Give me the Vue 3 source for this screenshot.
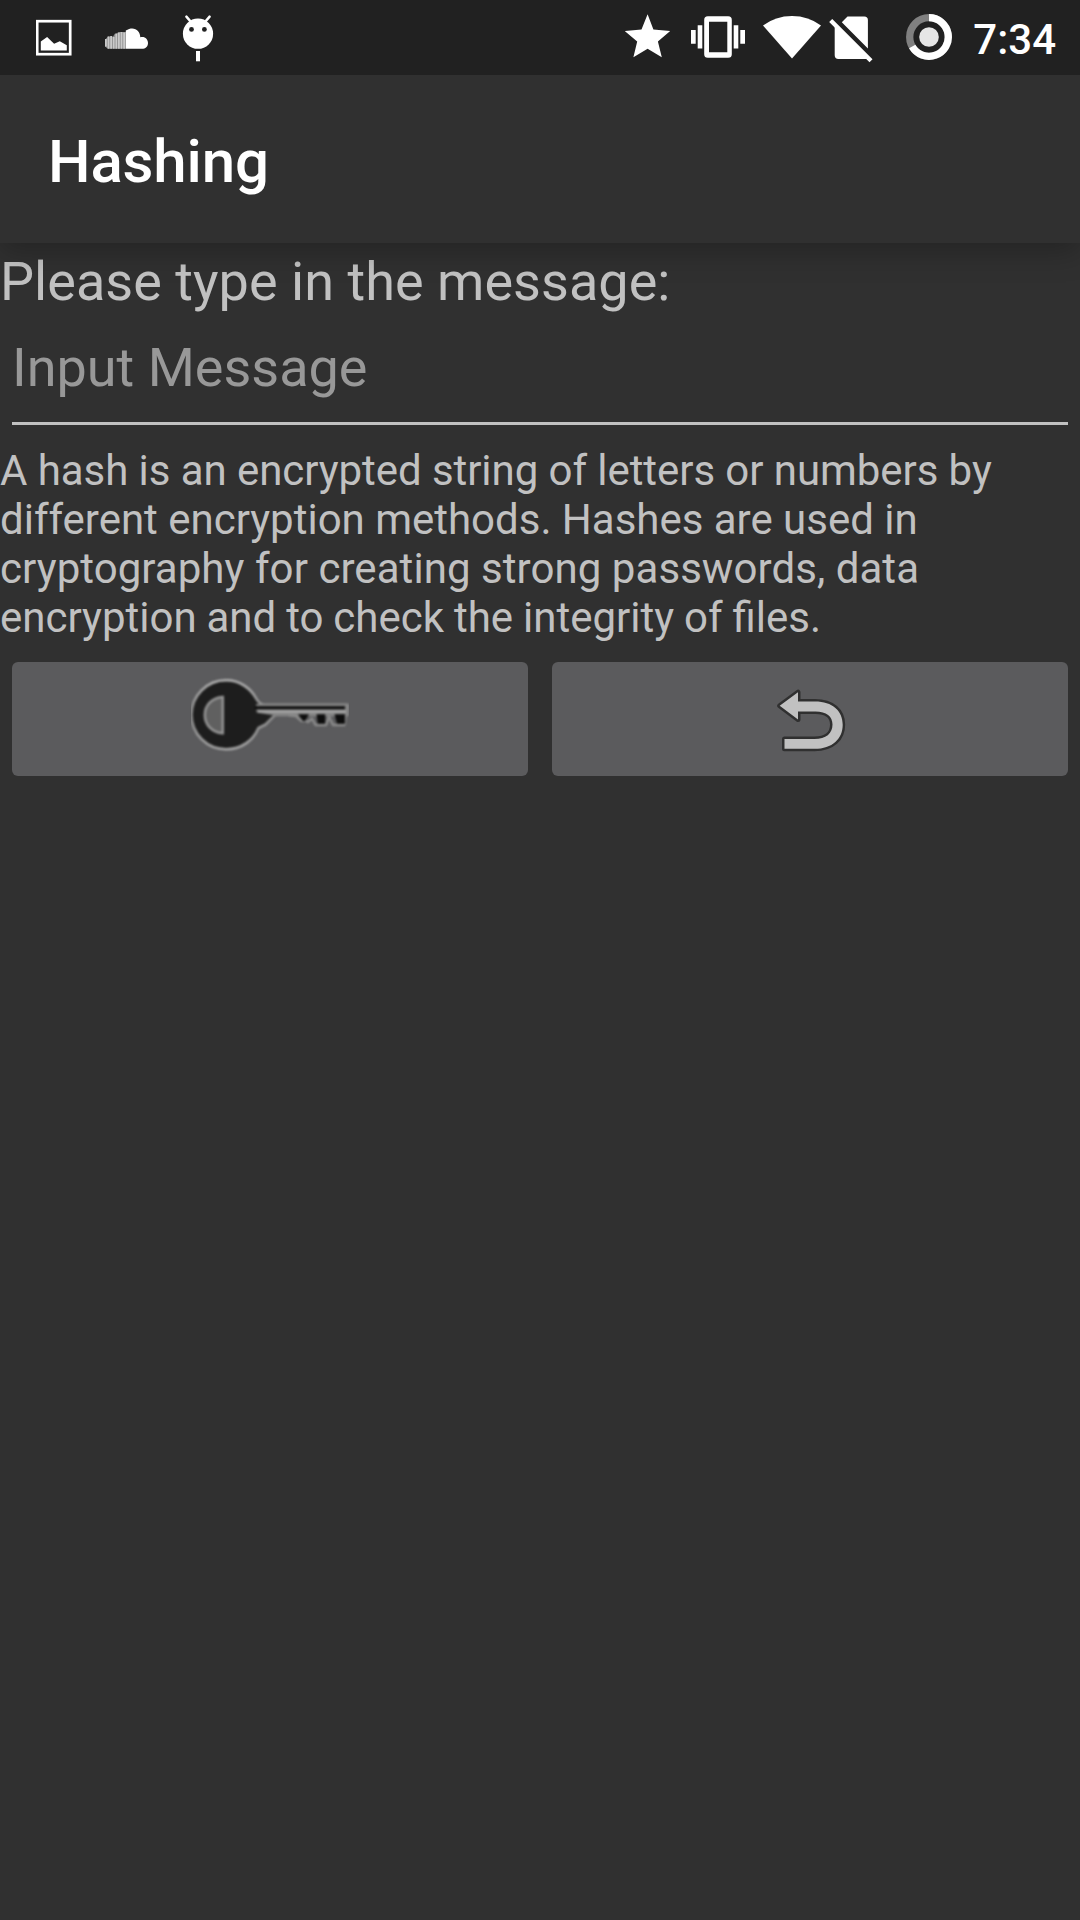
<script setup>
import { ref } from 'vue'

const message = ref('')
const stripes = [105, 107.6, 110.2, 112.8, 115.4, 118, 120.6, 123.2]
const tops = [39, 36.5, 36, 37, 34, 32.5, 32, 32.5]
</script>

<template>
  <div class="screen">
    <header class="status">
      <svg class="photo" width="36" height="75" viewBox="36 0 36 75">
        <rect x="37.2" y="21.2" width="33" height="33" fill="none" stroke="#fff" stroke-width="2.7" />
        <path d="M40.800 50.6V41.5L47.100 37l7 6.7 5.7-2.5 7 4v5.4z" fill="#fff" />
      </svg>
      <svg class="cloud" width="44" height="75" viewBox="104 0 44 75">
        <path d="M105 40l3-3.500h5l2-3 5-1.500h6v16.700h-18l-3-2.200z" fill="#8a8a8a" />
        <rect v-for="(x, i) in stripes" :key="x" :x="x" :y="tops[i]" width="1.8" :height="(i ? 48.7 : 46.5) - tops[i]" fill="#c9c9c9" />
        <path d="M125.8 30.5c8-5 14.300-.1 14.500 6.700 4.500-1.200 7.700 1.800 7.700 5.700 0 3.500-2.600 5.900-6 5.900h-16.200z" fill="#fff" />
      </svg>
      <svg class="droid" width="32" height="75" viewBox="182 0 32 75">
        <path d="M191 22l-4.600-5.400M205 22l4.600-5.400" stroke="#fff" stroke-width="2.500" stroke-linecap="round" />
        <circle cx="198" cy="33.700" r="15.100" fill="#fff" />
        <circle cx="191.500" cy="29.400" r="2.400" fill="#212121" />
        <circle cx="204.400" cy="29.400" r="2.400" fill="#212121" />
        <path d="M196 51h4v10.300h-4z" fill="#fff" />
      </svg>
      <span class="fill"></span>
      <svg class="star" width="46" height="75" viewBox="625 0 46 75">
        <path d="M647.600 14.300l5.800 15.200 16.800 1.500-12.300 10.400 3.900 15.900-14.200-8.500-14.200 8.500 3.800-15.900-12.400-10.400 16.700-1.500z" fill="#fff" />
      </svg>
      <svg class="vibrate" width="54" height="75" viewBox="691 0 54 75">
        <path fill="#fff" fill-rule="evenodd" d="M707.800 16.300h20.400a3.600 3.600 0 0 1 3.600 3.600v34.300a3.600 3.600 0 0 1-3.600 3.600h-20.400a3.600 3.600 0 0 1-3.600-3.600V19.900a3.600 3.600 0 0 1 3.600-3.600zM709 21.700v30.600h18.300V21.700zM697.700 25.300h4.600v23.300h-4.600zM691 30h4.700v13.800H691zM733.700 25.300h4.600v23.300h-4.600zM740.300 30h4.700v13.800h-4.700z" />
      </svg>
      <svg class="wifi" width="58" height="75" viewBox="763 0 58 75">
        <path d="M763 25.500Q775.500 16 792 16t29 9.500L792 58.600z" fill="#fff" />
      </svg>
      <svg class="sim" width="46" height="75" viewBox="828 0 46 75">
        <path d="M841.800 22.200l5.700-5.800h16.800q3.600 0 3.600 3.600v28.500zM834.700 25v30.300q0 3.700 3.700 3.700H868z" fill="#fff" />
        <path d="M830.700 20.500L871 60.800" stroke="#fff" stroke-width="4.300" />
      </svg>
      <svg class="battery" width="46" height="75" viewBox="906 0 46 75">
        <circle cx="929" cy="37" r="19.300" fill="none" stroke="#808080" stroke-width="7.300" />
        <path d="M929 17.700A19.300 19.300 0 1 1 912.200 46.500" fill="none" stroke="#fff" stroke-width="7.300" />
        <circle cx="929" cy="37" r="9.800" fill="#e6e6e6" />
      </svg>
      <span class="clock">7:34</span>
    </header>

    <div class="toolbar"><h1>Hashing</h1></div>

    <main>
      <label class="prompt" for="message">Please type in the message:</label>
      <div class="field">
        <input id="message" v-model="message" type="text" placeholder="Input Message" />
      </div>
      <p class="about">
        <span class="l1">A hash is an encrypted string of letters or numbers by</span>
        <span class="l2">different encryption methods. Hashes are used in</span>
        <span class="l3">cryptography for creating strong passwords, data</span>
        <span class="l4">encryption and to check the integrity of files.</span>
      </p>
      <div class="actions">
        <button type="button" aria-label="Hash">
          <svg class="key" width="158" height="114" viewBox="191 662 158 114">
            <defs>
              <linearGradient id="rim" gradientUnits="userSpaceOnUse" x1="0" y1="679" x2="0" y2="751">
                <stop offset="0" stop-color="#b4b4b4" />
                <stop offset=".5" stop-color="#8a8a8a" />
                <stop offset="1" stop-color="#a8a8a8" />
              </linearGradient>
            </defs>
            <g class="soft">
              <path d="M226 680.300c14.500 0 25 8.500 30.500 18.700q3 5.300 7.500 5.700h83.500v10.300h-72.500l-9.500 9.500-7 3.500c-5 12-16.500 21.300-32.500 21.300a34.500 34.500 0 0 1 0-69z" fill="#1d1d1d" stroke="url(#rim)" stroke-width="2.600" stroke-linejoin="round" />
              <path d="M256 704h91.500v11h-76l-15-2.500z" fill="#828282" />
              <path d="M258 711.600h88" stroke="#a8a8a8" stroke-width="2.200" />
              <path d="M255 707.700h90" stroke="#080808" stroke-width="3" />
              <path d="M289 715.300l7 .7 5.500 5 3.500-.5 3 1.500 4-3.500 3.500 6.500h10.500l3-8.500 4 8.500h11.500l1-10" fill="none" stroke="#8c8c8c" stroke-width="2.400" stroke-linejoin="round" />
              <path d="M298 714.300h11l-4 6.700h-2zM316.500 714.300h8.700v9.400h-7.400zM334.500 714.300h10.500v9.400h-8z" fill="#0c0c0c" />
              <path d="M222.800 697v36.200c-10.500-.5-18-8.200-18-18.200s7.500-17.500 18-18z" fill="#606060" stroke="#969696" stroke-width="2.400" />
            </g>
          </svg>
        </button>
        <button type="button" aria-label="Back">
          <svg width="140" height="114" viewBox="740 662 140 114">
            <path d="M779.700 705.700l18.300-13.500v9.300h17c17.500 0 27.700 9.500 27.700 23.200 0 14-10.200 24.100-28.200 24.100h-30V739h30c11.500 0 18-5.500 18-14.500 0-8-6-13-17-13H798v8z" fill="#c1c1c1" stroke="#303030" stroke-width="5" stroke-linejoin="round" paint-order="stroke" />
          </svg>
        </button>
      </div>
    </main>
  </div>
</template>

<style>
body {
  margin: 0;
  background: #303030;
}
</style>

<style scoped>
.screen {
  width: 1080px;
  height: 1920px;
  overflow: hidden;
  background: #303030;
  color: #c1c1c1;
  font-family: Roboto, "Liberation Sans", sans-serif;
}
svg {
  display: block;
  flex: none;
}
.status {
  box-sizing: border-box;
  height: 75px;
  padding: 0 24px 0 36px;
  display: flex;
  background: #212121;
}
.cloud { margin-left: 32px; }
.droid { margin-left: 34px; }
.fill { flex: 1; }
.vibrate { margin-left: 20px; }
.wifi { margin-left: 18px; }
.sim { margin-left: 7px; }
.battery { margin-left: 32px; }
.clock {
  width: 104px;
  text-align: right;
  font-size: 42px;
  font-weight: 500;
  line-height: 79px;
  color: #fff;
}
.toolbar {
  position: relative;
  height: 168px;
  padding-left: 48px;
  display: flex;
  align-items: center;
  background: #303030;
  box-shadow: 0 8px 28px rgba(0, 0, 0, 0.26);
  clip-path: inset(0 0 -50px 0);
}
h1 {
  margin: 6px 0 0;
  font-size: 60px;
  font-weight: 500;
  line-height: 70px;
  letter-spacing: -0.15px;
  color: #fff;
}
.prompt {
  display: block;
  padding: 3px 0 1px;
  font-size: 54px;
  line-height: 72px;
  letter-spacing: 0.03px;
}
.field {
  margin: 0 12px;
  height: 103px;
  border-bottom: 3px solid #c1c1c1;
}
input {
  display: block;
  width: 100%;
  height: 96px;
  box-sizing: border-box;
  padding: 0;
  border: 0;
  outline: 0;
  background: transparent;
  color: #fff;
  font: 54px/72px Roboto, "Liberation Sans", sans-serif;
}
input::placeholder {
  color: #989898;
  opacity: 1;
}
.about {
  margin: 21px 0 0;
  font-size: 42px;
  line-height: 49px;
  white-space: nowrap;
}
.about span { display: block; }
.l1 { letter-spacing: -0.065px; }
.l2 { letter-spacing: -0.01px; }
.l3 { letter-spacing: 0.06px; }
.l4 { word-spacing: -0.5px; }
.actions {
  display: flex;
  gap: 24px;
  margin: 20px 12px 0;
}
button {
  flex: 1;
  height: 114px;
  padding: 0;
  border: 0;
  border-radius: 6px;
  display: flex;
  justify-content: center;
  background: #5b5b5d;
}
.soft { filter: blur(0.8px); }
</style>
